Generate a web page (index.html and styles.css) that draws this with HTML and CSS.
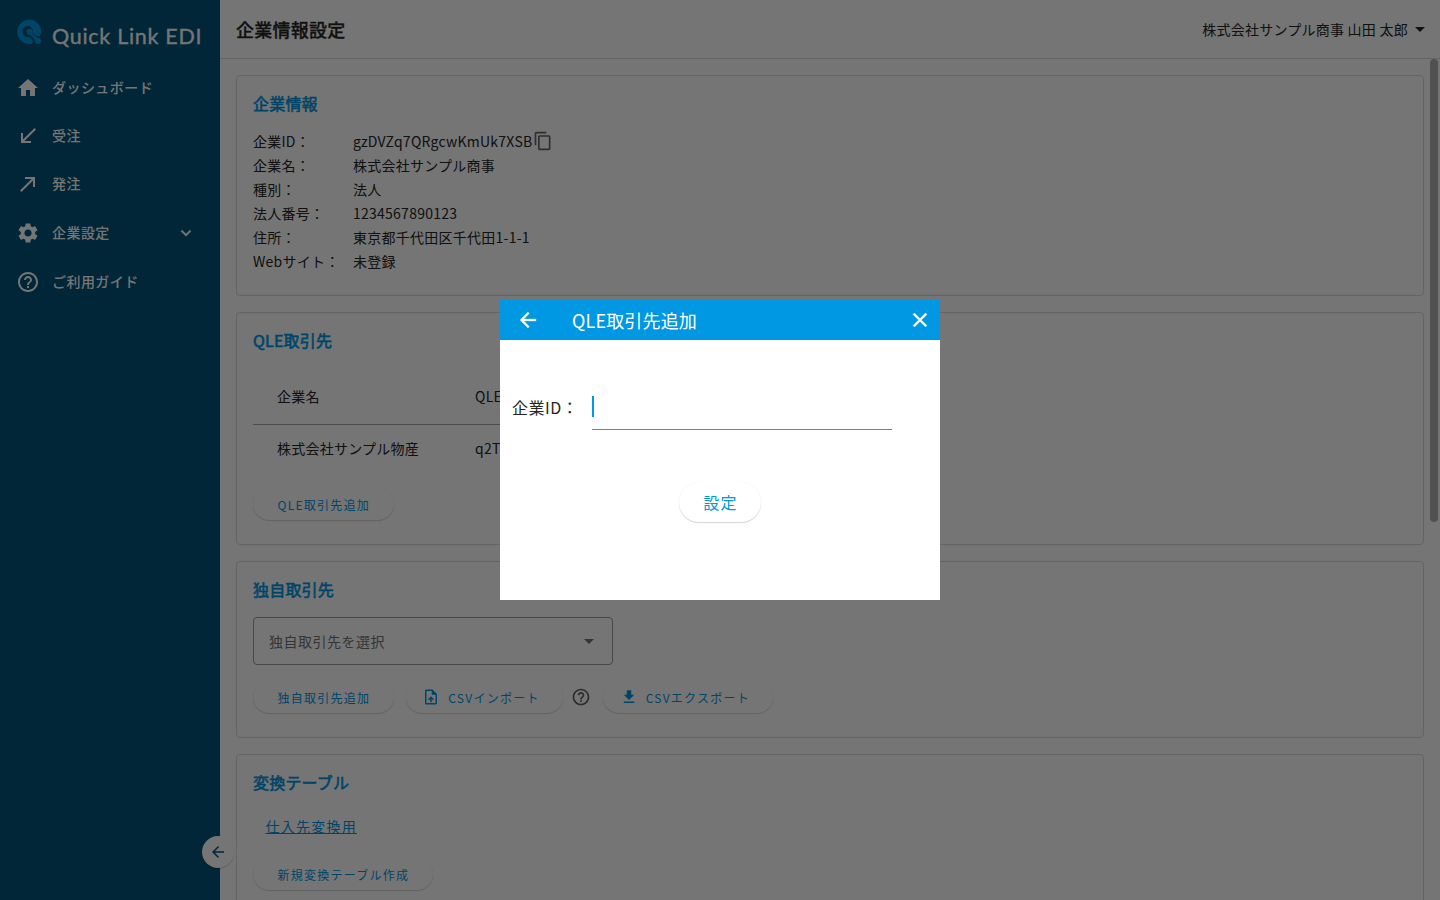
FILE: index.html
```html
<!DOCTYPE html>
<html lang="ja">
<head>
    <meta charset="UTF-8">
    <meta name="viewport" content="width=device-width, initial-scale=1.0">
    <title>Quick Link EDI</title>
    <link rel="stylesheet" href="styles.css">
</head>
<body>
    <div class="app">
        <nav class="sidebar">
            <div class="logo">
                <svg class="logo-mark" width="26" height="26" viewBox="0 0 26 26">
                    <path fill="#0097e3" d="M12.5 .5A12.5 12.5 0 0 1 25.3 12.5Q25 16.2 22.5 17.6Q20.3 17.3 19 15.7L16.6 13.2A4 4 0 0 0 16 9.5A5.3 5.3 0 1 0 12.5 17.8L16 20.4Q18.5 23 15.5 25H12.5A12.3 12.3 0 0 1 12.5 .5Z"/>
                    <circle cx="13.5" cy="12.7" r="3" fill="#0097e3"/>
                    <path d="M14 13.5L22 21.8" stroke="#0097e3" stroke-width="3"/>
                    <circle cx="22.2" cy="22" r="3" fill="#0097e3"/>
                </svg>
                <svg class="logo-text" width="152" height="30" viewBox="0 0 152 30">
                    <text x="0" y="22" textLength="149.5">Quick Link EDI</text>
                </svg>
            </div>
            <a class="nav-item">
                <svg class="icon" viewBox="0 0 24 24"><path d="M10 20v-6h4v6h5v-8h3L12 3 2 12h3v8z"/></svg>
                <span>ダッシュボード</span>
            </a>
            <a class="nav-item">
                <svg class="icon" viewBox="0 0 24 24"><path d="M20 5.41L18.59 4 7 15.59V9H5v10h10v-2H8.41z"/></svg>
                <span>受注</span>
            </a>
            <a class="nav-item">
                <svg class="icon" viewBox="0 0 24 24"><path d="M9 5v2h6.59L4 18.59 5.41 20 17 8.41V15h2V5z"/></svg>
                <span>発注</span>
            </a>
            <a class="nav-item nav-parent">
                <svg class="icon" viewBox="0 0 24 24"><path d="M19.14 12.94c.04-.3.06-.61.06-.94 0-.32-.02-.64-.07-.94l2.03-1.58c.18-.14.23-.41.12-.61l-1.92-3.32c-.12-.22-.37-.29-.59-.22l-2.39.96c-.5-.38-1.03-.7-1.62-.94l-.36-2.54c-.04-.24-.24-.41-.48-.41h-3.84c-.24 0-.43.17-.47.41l-.36 2.54c-.59.24-1.13.57-1.62.94l-2.39-.96c-.22-.08-.47 0-.59.22L2.74 8.87c-.12.21-.08.47.12.61l2.03 1.58c-.05.3-.09.63-.09.94s.02.64.07.94l-2.03 1.58c-.18.14-.23.41-.12.61l1.92 3.32c.12.22.37.29.59.22l2.39-.96c.5.38 1.03.7 1.62.94l.36 2.54c.05.24.24.41.48.41h3.84c.24 0 .44-.17.47-.41l.36-2.54c.59-.24 1.13-.56 1.62-.94l2.39.96c.22.08.47 0 .59-.22l1.92-3.32c.12-.22.07-.47-.12-.61l-2.01-1.58zM12 15.6c-1.98 0-3.6-1.62-3.6-3.6s1.62-3.6 3.6-3.6 3.6 1.62 3.6 3.6-1.62 3.6-3.6 3.6z"/></svg>
                <span>企業設定</span>
                <svg class="chevron" viewBox="0 0 24 24"><path d="M7.41 8.59L12 13.17l4.59-4.58L18 10l-6 6-6-6z"/></svg>
            </a>
            <a class="nav-item">
                <svg class="icon" viewBox="0 0 24 24"><path d="M11 18h2v-2h-2v2zm1-16C6.48 2 2 6.48 2 12s4.48 10 10 10 10-4.48 10-10S17.52 2 12 2zm0 18c-4.41 0-8-3.59-8-8s3.59-8 8-8 8 3.59 8 8-3.59 8-8 8zm0-14c-2.21 0-4 1.79-4 4h2c0-1.1.9-2 2-2s2 .9 2 2c0 2-3 1.75-3 5h2c0-2.25 3-2.5 3-5 0-2.21-1.79-4-4-4z"/></svg>
                <span>ご利用ガイド</span>
            </a>
        </nav>
        <button class="collapse">
            <svg width="18" height="18" viewBox="0 0 24 24"><path d="M20 11H7.83l5.59-5.59L12 4l-8 8 8 8 1.41-1.41L7.83 13H20v-2z"/></svg>
        </button>

        <div class="main">
            <header class="header">
                <h1>企業情報設定</h1>
                <div class="user">
                    <span>株式会社サンプル商事 山田 太郎</span>
                    <i class="caret"></i>
                </div>
            </header>
            <div class="content">
                <section class="card card-company">
                    <h2>企業情報</h2>
                    <dl class="info">
                        <dt>企業ID：</dt>
                        <dd>gzDVZq7QRgcwKmUk7XSB<svg class="copy" viewBox="0 0 24 24"><path d="M16 1H4c-1.1 0-2 .9-2 2v14h2V3h12V1zm3 4H8c-1.1 0-2 .9-2 2v14c0 1.1.9 2 2 2h11c1.1 0 2-.9 2-2V7c0-1.1-.9-2-2-2zm0 16H8V7h11v14z"/></svg></dd>
                        <dt>企業名：</dt>
                        <dd>株式会社サンプル商事</dd>
                        <dt>種別：</dt>
                        <dd>法人</dd>
                        <dt>法人番号：</dt>
                        <dd>1234567890123</dd>
                        <dt>住所：</dt>
                        <dd>東京都千代田区千代田1-1-1</dd>
                        <dt>Webサイト：</dt>
                        <dd>未登録</dd>
                    </dl>
                </section>

                <section class="card card-qle">
                    <h2>QLE取引先</h2>
                    <div class="table">
                        <div class="row head"><span>企業名</span><span>QLE</span></div>
                        <div class="row"><span>株式会社サンプル物産</span><span>q2T</span></div>
                    </div>
                    <button class="btn">QLE取引先追加</button>
                </section>

                <section class="card card-own">
                    <h2>独自取引先</h2>
                    <div class="select">
                        <span>独自取引先を選択</span>
                        <i class="caret"></i>
                    </div>
                    <div class="actions">
                        <button class="btn">独自取引先追加</button>
                        <button class="btn btn-icon btn-import">
                            <svg viewBox="0 0 24 24"><path d="M14 2H6c-1.1 0-1.99.9-1.99 2L4 20c0 1.1.89 2 1.99 2H18c1.1 0 2-.9 2-2V8l-6-6zm4 18H6V4h7v5h5v11zM8 15.01l1.41 1.41L11 14.84V19h2v-4.16l1.59 1.59L16 15.01 12.01 11z"/></svg>
                            CSVインポート
                        </button>
                        <svg class="help" viewBox="0 0 24 24"><path d="M11 18h2v-2h-2v2zm1-16C6.48 2 2 6.48 2 12s4.48 10 10 10 10-4.48 10-10S17.52 2 12 2zm0 18c-4.41 0-8-3.59-8-8s3.59-8 8-8 8 3.59 8 8-3.59 8-8 8zm0-14c-2.21 0-4 1.79-4 4h2c0-1.1.9-2 2-2s2 .9 2 2c0 2-3 1.75-3 5h2c0-2.25 3-2.5 3-5 0-2.21-1.79-4-4-4z"/></svg>
                        <button class="btn btn-icon">
                            <svg viewBox="0 0 24 24"><path d="M19 9h-4V3H9v6H5l7 7 7-7zM5 18v2h14v-2H5z"/></svg>
                            CSVエクスポート
                        </button>
                    </div>
                </section>

                <section class="card card-convert">
                    <h2>変換テーブル</h2>
                    <a class="link">仕入先変換用</a>
                    <button class="btn">新規変換テーブル作成</button>
                </section>
            </div>
            <div class="scrollbar"></div>
        </div>
    </div>

    <div class="overlay">
        <div class="modal">
            <div class="modal-header">
                <svg class="back" viewBox="0 0 24 24"><path d="M20 11H7.83l5.59-5.59L12 4l-8 8 8 8 1.41-1.41L7.83 13H20v-2z"/></svg>
                <span class="modal-title">QLE取引先追加</span>
                <svg class="close" viewBox="0 0 24 24"><path d="M19 6.41L17.59 5 12 10.59 6.41 5 5 6.41 10.59 12 5 17.59 6.41 19 12 13.41 17.59 19 19 17.59 13.41 12z"/></svg>
            </div>
            <div class="field">
                <label>企業ID：</label>
                <div class="input"><i class="cursor"></i></div>
            </div>
            <button class="btn btn-submit">設定</button>
        </div>
    </div>
</body>
</html>
```
FILE: styles.css
```css
* {
    box-sizing: border-box;
}

body {
    margin: 0;
    height: 100vh;
    overflow: hidden;
    background: #fff;
    color: #262626;
    font-family: "Noto Sans CJK JP", sans-serif;
    font-size: 14px;
    letter-spacing: 0.25px;
}

svg {
    display: block;
    flex-shrink: 0;
    fill: currentColor;
}

h1, h2, dl, dd {
    margin: 0;
}

button {
    font-family: inherit;
    border: none;
}

.app {
    display: flex;
    position: relative;
    height: 900px;
}

/* sidebar */
.sidebar {
    width: 220px;
    background: #005378;
    color: #fff;
}

.logo {
    display: flex;
    height: 64px;
    padding: 19px 0 0 16px;
}

.logo-text {
    margin: 3px 0 0 10px;
}

.logo-text text {
    font-family: Lato, sans-serif;
    font-size: 21.5px;
    letter-spacing: 0;
    stroke: #fff;
    stroke-width: 0.3px;
}

.nav-item {
    display: flex;
    align-items: center;
    height: 48px;
    padding: 0 24px 0 16px;
    font-weight: 500;
    letter-spacing: 0.45px;
}

.nav-parent {
    height: 50px;
}

.nav-item span {
    margin-top: -2px;
}

.nav-item .icon {
    width: 24px;
    height: 24px;
    margin-right: 12px;
}

.chevron {
    width: 20px;
    height: 20px;
    margin-left: auto;
    stroke: currentColor;
    stroke-width: 0.6;
}

.collapse {
    position: absolute;
    left: 202px;
    top: 836px;
    display: flex;
    align-items: center;
    justify-content: center;
    width: 32px;
    height: 32px;
    padding: 0;
    border-radius: 50%;
    background: #fff;
    color: #005378;
    box-shadow: 0 1px 1px rgba(0,0,0,0.2);
}

/* main */
.main {
    position: relative;
    flex: 1;
    height: 900px;
    overflow: hidden;
}

.header {
    display: flex;
    align-items: center;
    justify-content: space-between;
    height: 59px;
    padding: 0 15px 0 16px;
    border-bottom: 1px solid #dadada;
}

h1 {
    font-size: 18px;
    font-weight: 500;
    letter-spacing: 0.25px;
    -webkit-text-stroke: 0.3px;
}

.user {
    display: flex;
    align-items: center;
    gap: 7px;
}

.user span {
    margin-top: -1px;
}

.caret {
    border: 5px solid transparent;
    border-top-color: currentColor;
    border-bottom: none;
}

.content {
    display: flex;
    flex-direction: column;
    gap: 16px;
    padding: 16px;
}

.scrollbar {
    position: absolute;
    right: 2px;
    top: 59px;
    width: 8px;
    height: 463px;
    border-radius: 4px;
    background: #b0b0b0;
}

.card {
    flex-shrink: 0;
    padding: 15px 16px 16px;
    border: 1px solid #dadada;
    border-radius: 4px;
}

.card-company {
    height: 221px;
}

.card-qle {
    height: 233px;
}

.card-own {
    height: 177px;
}

.card-convert {
    height: 170px;
}

h2 {
    color: #0097e3;
    font-size: 16px;
    font-weight: 400;
    line-height: 24px;
    letter-spacing: 0.2px;
    -webkit-text-stroke: 0.6px;
}

.info {
    display: grid;
    grid-template-columns: 100px 1fr;
    grid-auto-rows: 24px;
    line-height: 24px;
    margin-top: 14px;
}

dd {
    display: flex;
    align-items: center;
}

.copy {
    width: 20px;
    height: 20px;
    margin-left: 1px;
    color: #666;
}

.table {
    width: 600px;
    margin-top: 17px;
}

.row {
    display: grid;
    grid-template-columns: 198px 1fr;
    align-items: center;
    height: 48px;
    padding: 0 24px;
}

.row span {
    margin-top: -2px;
}

.row.head {
    height: 56px;
    border-bottom: 1px solid #aaa;
}

.btn {
    display: flex;
    align-items: center;
    justify-content: center;
    height: 32px;
    padding: 0 23.5px 0 24.5px;
    border-radius: 16px;
    background: #fff;
    color: #0097e3;
    font-size: 12px;
    letter-spacing: 1.25px;
    box-shadow: 0 1px 1px rgba(0,0,0,0.16), 0 0 1px rgba(0,0,0,0.08);
}

.card-qle .btn {
    margin-top: 15px;
}

.select {
    display: flex;
    align-items: center;
    justify-content: space-between;
    width: 360px;
    height: 48px;
    margin-top: 16px;
    padding: 0 18px 0 15px;
    border: 1px solid #9e9e9e;
    border-radius: 4px;
    color: #757575;
    letter-spacing: 0.5px;
}

.actions {
    display: flex;
    align-items: center;
    margin-top: 16px;
}

.btn-icon {
    gap: 8px;
    padding: 0 23.5px 0 16.5px;
}

.btn-icon svg {
    width: 18px;
    height: 18px;
}

.btn-import {
    margin-left: 12px;
}

.help {
    width: 20px;
    height: 20px;
    margin: 0 12px 0 8px;
    color: #616161;
}

.link {
    display: block;
    width: fit-content;
    margin: 20px 0 0 12.5px;
    color: #0097e3;
    line-height: 24px;
    letter-spacing: 1.25px;
    text-decoration: underline;
}

.card-convert .btn {
    margin-top: 20px;
}

/* dialog */
.overlay {
    position: absolute;
    inset: 0;
    display: flex;
    align-items: center;
    justify-content: center;
    background: rgba(0,0,0,0.54);
}

.modal {
    width: 440px;
    height: 300px;
    background: #fff;
}

.modal-header {
    display: flex;
    align-items: center;
    height: 40px;
    padding: 0 8px 0 16px;
    background: #0097e3;
    color: #fff;
}

.modal-header svg {
    width: 24px;
    height: 24px;
    stroke: currentColor;
    stroke-width: 0.3;
}

.modal-title {
    margin-left: 32px;
    font-size: 18px;
    letter-spacing: 0.15px;
}

.close {
    margin-left: auto;
}

.field {
    display: flex;
    align-items: center;
    height: 40px;
    margin-top: 50px;
    padding-left: 12px;
}

.field label {
    width: 80px;
    margin-top: -6px;
    font-size: 16px;
    letter-spacing: 0.5px;
}

.input {
    width: 300px;
    height: 40px;
    padding-top: 6px;
    border-bottom: 1px solid #2196f3;
}

.cursor {
    display: block;
    width: 2px;
    height: 21px;
    background: #0097e3;
}

.btn-submit {
    height: 40px;
    margin: 52px auto 0;
    border-radius: 20px;
    font-size: 16px;
}
```
